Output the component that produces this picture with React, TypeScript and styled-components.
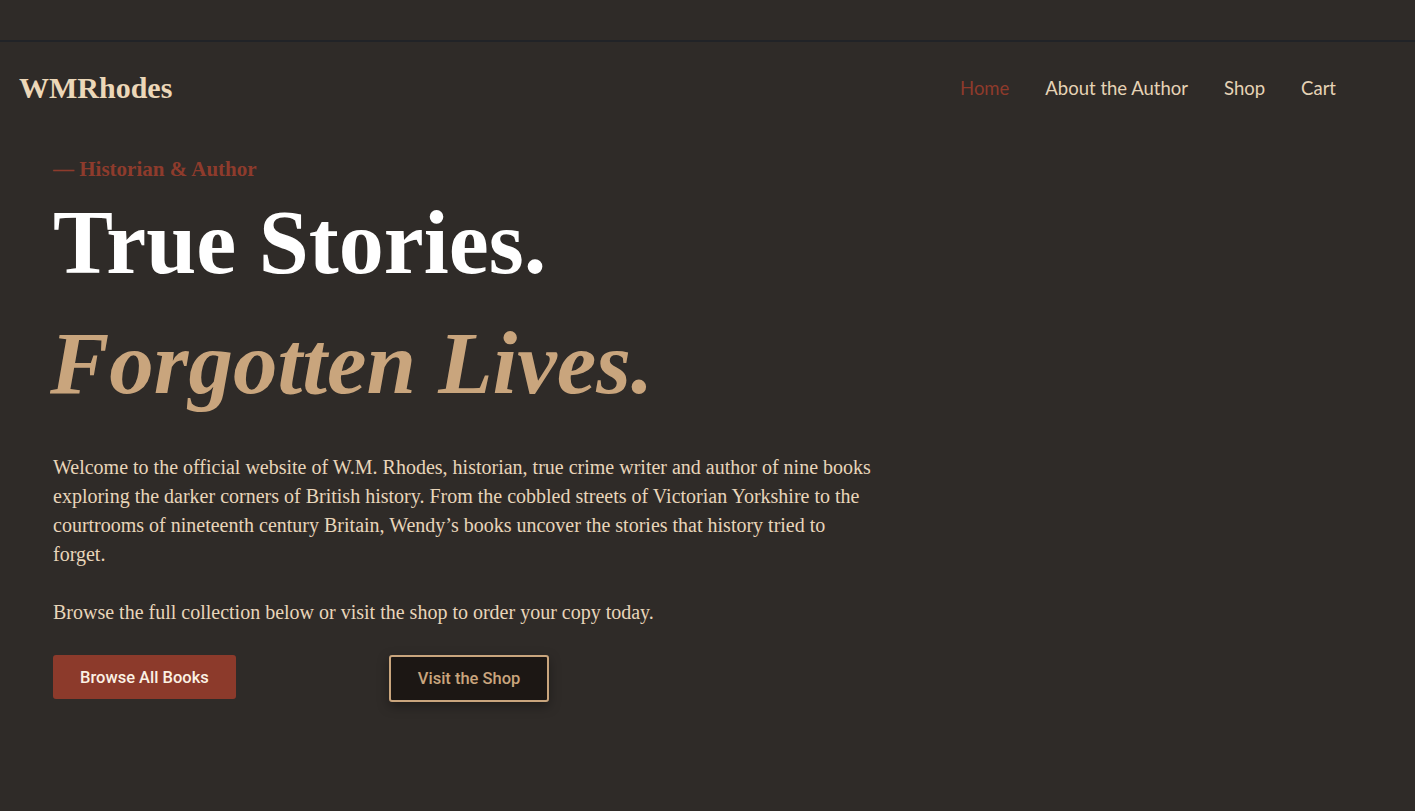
import React from "react";
import styled, { createGlobalStyle } from "styled-components";

const GlobalStyle = createGlobalStyle`
  html, body { margin: 0; padding: 0; background: #2f2b28; }
  body { font-family: "Liberation Serif", serif; }
  * { box-sizing: border-box; }
`;

const Page = styled.div`
  min-height: 811px;
  background: #2f2b28;
  display: flex;
  flex-direction: column;
`;

const TopStrip = styled.div`
  height: 42px;
  border-bottom: 2px solid #212327;
`;

const Header = styled.header`
  display: flex;
  align-items: center;
  justify-content: space-between;
  padding: 0 79px 0 19px;
  height: 92px;
`;

const Logo = styled.div`
  font-family: "Liberation Serif", serif;
  font-weight: 700;
  font-size: 30px;
  color: #ecd7b8;
  letter-spacing: 0;
`;

const Nav = styled.nav`
  display: flex;
  gap: 36px;
  align-items: center;
`;

const NavLink = styled.a<{ $active?: boolean }>`
  font-family: Lato, "Open Sans", sans-serif;
  font-size: 18.5px;
  color: ${(p) => (p.$active ? "#8e3a2b" : "#e6d3b6")};
  text-decoration: none;
  cursor: pointer;
`;

const Hero = styled.section`
  padding: 22px 53px 0 53px;
  display: flex;
  flex-direction: column;
`;

const Eyebrow = styled.div`
  font-family: "Liberation Serif", serif;
  font-weight: 700;
  font-size: 21px;
  color: #8e3b2c;
  line-height: 26px;
`;

const Title = styled.h1`
  margin: 1px 0 0 0;
  font-family: "Liberation Serif", serif;
  font-weight: 700;
  font-size: 90px;
  line-height: 120px;
`;

const TitleLine = styled.span<{ $italic?: boolean }>`
  display: block;
  color: ${(p) => (p.$italic ? "#c9a57d" : "#ffffff")};
  font-style: ${(p) => (p.$italic ? "italic" : "normal")};
  font-size: ${(p) => (p.$italic ? "89px" : "90px")};
  margin-left: ${(p) => (p.$italic ? "-3px" : "0")};
`;

const Paragraph = styled.p<{ $gap?: number }>`
  margin: ${(p) => p.$gap ?? 0}px 0 0 0;
  max-width: 824px;
  font-family: "Liberation Serif", serif;
  font-size: 20px;
  line-height: 29px;
  color: #e8d5ba;
`;

const Actions = styled.div`
  display: flex;
  align-items: flex-start;
  gap: 153px;
  margin-top: 28px;
`;

const Button = styled.button<{ $variant: "primary" | "outline" }>`
  font-family: Roboto, "Liberation Sans", sans-serif;
  font-weight: 500;
  font-size: 16.5px;
  border-radius: 3px;
  cursor: pointer;
  ${(p) =>
    p.$variant === "primary"
      ? `
    background: #8c3a2b;
    color: #fbf1e4;
    border: none;
    height: 44px;
    padding: 0 27px;
  `
      : `
    background: #1c1714;
    color: #c9a57d;
    border: 2px solid #c9a57d;
    height: 47px;
    padding: 0 27px;
    box-shadow: 0 4px 12px rgba(0,0,0,0.35);
  `}
`;

export default function App() {
  return (
    <>
      <GlobalStyle />
      <Page>
        <TopStrip />
        <Header>
          <Logo>WMRhodes</Logo>
          <Nav>
            <NavLink $active>Home</NavLink>
            <NavLink>About the Author</NavLink>
            <NavLink>Shop</NavLink>
            <NavLink>Cart</NavLink>
          </Nav>
        </Header>
        <Hero>
          <Eyebrow>— Historian &amp; Author</Eyebrow>
          <Title>
            <TitleLine>True Stories.</TitleLine>
            <TitleLine $italic>Forgotten Lives.</TitleLine>
          </Title>
          <Paragraph $gap={30}>
            Welcome to the official website of W.M. Rhodes, historian, true crime writer and author of nine books
            exploring the darker corners of British history. From the cobbled streets of Victorian Yorkshire to the
            courtrooms of nineteenth century Britain, Wendy’s books uncover the stories that history tried to
            forget.
          </Paragraph>
          <Paragraph $gap={29}>
            Browse the full collection below or visit the shop to order your copy today.
          </Paragraph>
          <Actions>
            <Button $variant="primary">Browse All Books</Button>
            <Button $variant="outline">Visit the Shop</Button>
          </Actions>
        </Hero>
      </Page>
    </>
  );
}
